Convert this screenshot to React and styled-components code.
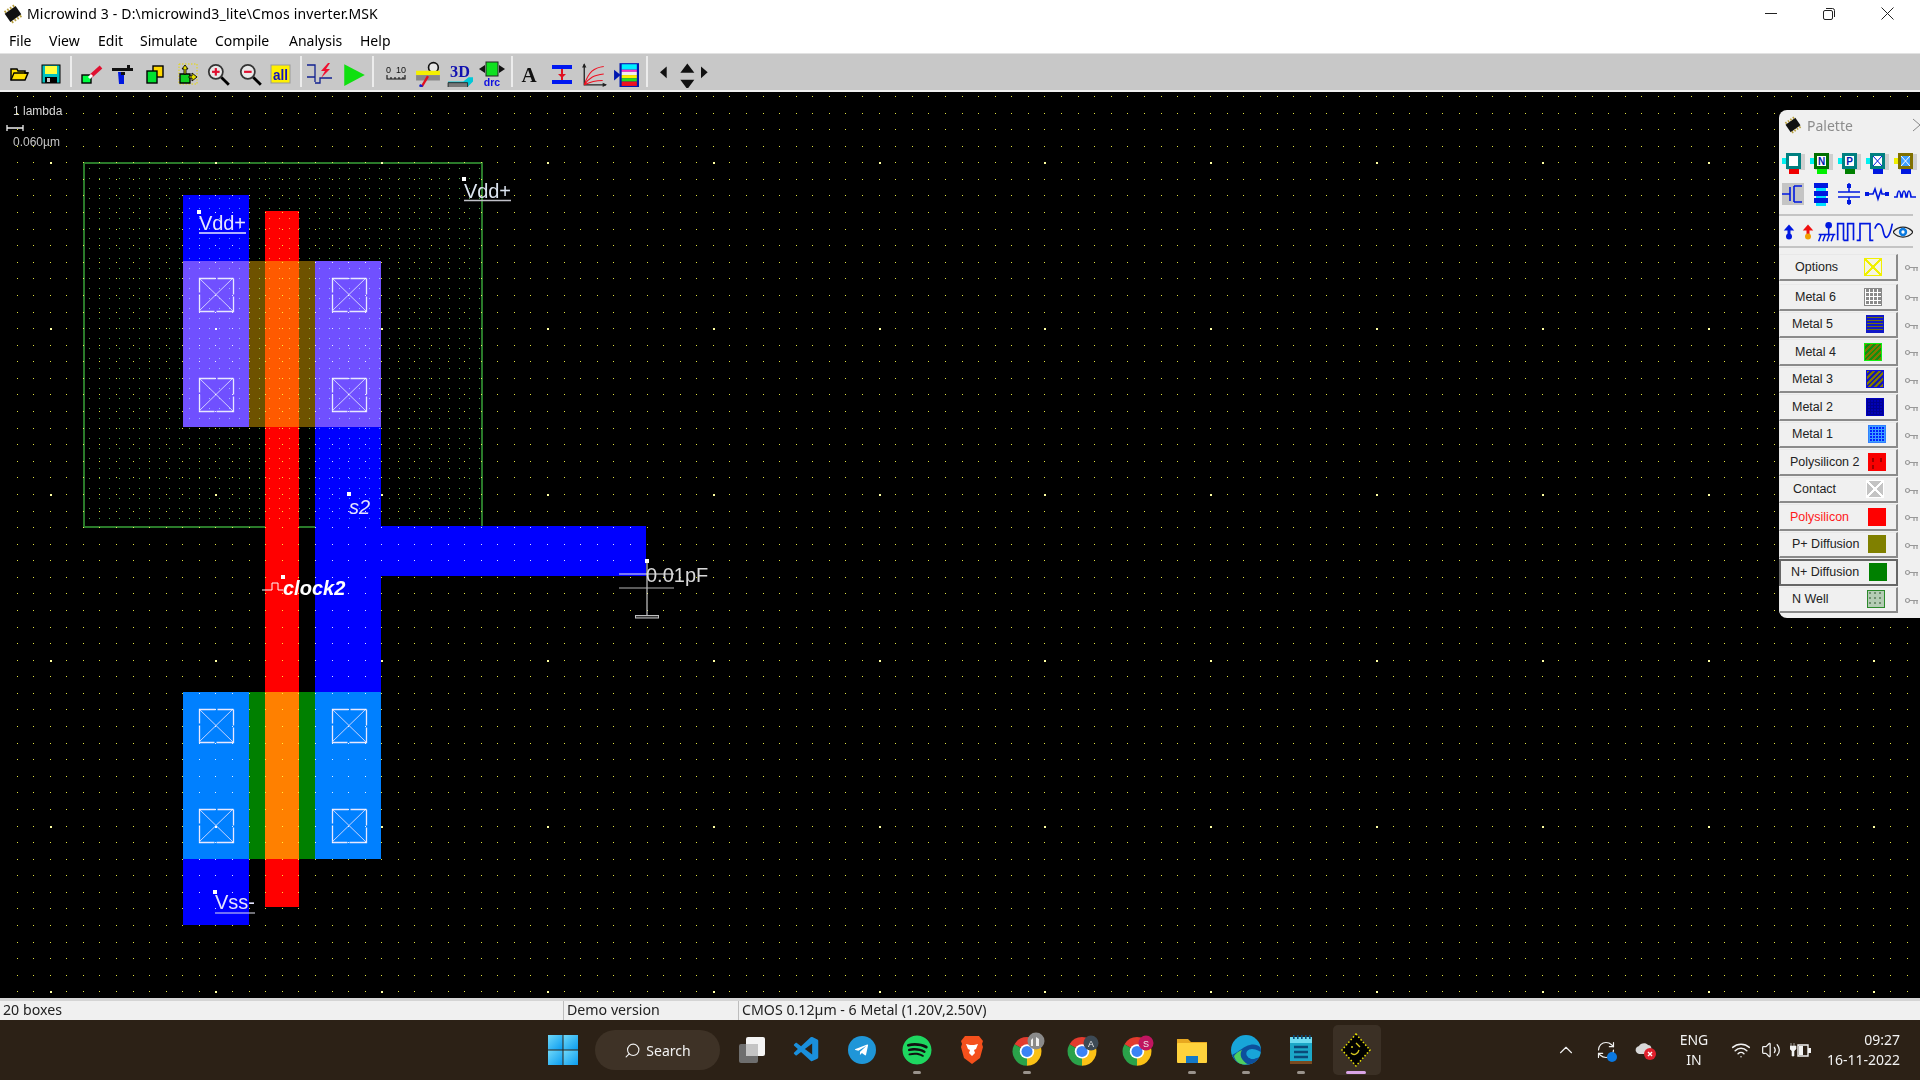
import React from 'react'
import styled, { createGlobalStyle } from 'styled-components'
import { ChevronUp, RefreshCw, Search, Volume2, Wifi } from 'lucide-react'
import { VscVscode } from 'react-icons/vsc'
import { FaSpotify, FaTelegramPlane } from 'react-icons/fa'

const GlobalStyle = createGlobalStyle`
	html, body {
		margin: 0;
		padding: 0;
		background: #000;
	}
	* {
		box-sizing: border-box;
	}
`

const Window = styled.div`
	width: 1920px;
	height: 1080px;
	display: flex;
	flex-direction: column;
	overflow: hidden;
	font-family: "Noto Sans", "Liberation Sans", sans-serif;
	color: #000;
	background: #fff;
`

/* title + menu */
const TitleBar = styled.div`
	height: 27px;
	flex: none;
	display: flex;
	align-items: center;
	padding-left: 3px;
	font-size: 14px;
	letter-spacing: 0.16px;
	svg { flex: none; }
`
const TitleText = styled.span`
	margin-left: 4px;
`
const WinButtons = styled.div`
	margin-left: auto;
	display: flex;
	margin-right: 3px;
`
const WinButton = styled.div`
	width: 58.5px;
	height: 27px;
	display: flex;
	align-items: center;
	justify-content: center;
`
const MenuBar = styled.div`
	height: 26px;
	flex: none;
	display: flex;
	align-items: center;
	font-size: 14px;
`
const MenuItem = styled.span`
	width: ${p => p.$w}px;
	padding-left: ${p => p.$pad || 0}px;
`

/* toolbar */
const Toolbar = styled.div`
	height: 39px;
	flex: none;
	display: flex;
	align-items: stretch;
	padding: 2px 0 3px 3px;
	background: #c8c8c8;
	border-top: 1px solid #e2e2e2;
	border-bottom: 2px solid #f0f0f0;
`
const ToolGroup = styled.div`
	display: flex;
	margin-left: ${p => p.$ml || 0}px;
`
const Tool = styled.div`
	width: ${p => p.$w}px;
	min-width: 0;
	padding-top: 4px;
	display: flex;
	align-items: center;
	justify-content: center;
	svg { flex: none; }
`
const ToolSep = styled.div`
	width: 2px;
	margin: 0 0 0 ${p => p.$ml}px;
	background: #ececec;
`

/* canvas */
const Canvas = styled.div`
	position: relative;
	flex: none;
	height: 906px;
	background: #000;
	overflow: hidden;
`
const Mask = styled.svg`
	display: block;
`
const Dots = styled.path`
	mix-blend-mode: screen;
	fill: ${p => p.$c};
`
const MaskText = styled.text`
	font-family: "Liberation Sans", sans-serif;
	font-size: ${p => p.$size}px;
	font-style: ${p => (p.$italic ? 'italic' : 'normal')};
	font-weight: ${p => (p.$bold ? 700 : 400)};
	fill: ${p => p.$c || '#e4e4ff'};
`

/* palette */
const Palette = styled.div`
	position: absolute;
	left: 1779px;
	top: 18px;
	width: 141px;
	height: 508px;
	background: #f0f0f0;
	border-radius: 8px 0 0 8px;
	overflow: hidden;
	font-family: "Liberation Sans", sans-serif;
`
const PaletteTitle = styled.div`
	height: 30px;
	display: flex;
	align-items: center;
	padding: 0 0 0 5px;
	font-family: "Noto Sans", sans-serif;
	font-size: 14px;
	color: #8c8c8c;
	span { margin-left: 5px; }
	svg:last-child { margin-left: auto; flex: none; }
`
const IconRow = styled.div`
	display: grid;
	grid-template-columns: repeat(${p => p.$cols}, ${p => p.$w}px);
	margin-top: ${p => p.$mt}px;
	height: 24px;
	justify-items: center;
	align-items: center;
`
const Divider = styled.div`
	height: 2px;
	width: 134px;
	margin-top: ${p => p.$mt}px;
	background: #c4c4c4;
`
const Layers = styled.div`
	margin-top: 6px;
	display: flex;
	flex-direction: column;
`
const LayerRow = styled.div`
	height: 27.5px;
	margin-bottom: ${p => p.$extra || 0}px;
	display: flex;
	align-items: flex-start;
`
const LayerButton = styled.div`
	width: 119px;
	height: 26.5px;
	display: flex;
	align-items: center;
	padding-left: ${p => p.$indent}px;
	padding-right: ${p => p.$right}px;
	background: #f0f0f0;
	font-size: 12.5px;
	color: ${p => (p.$red ? '#ff1a1a' : '#222')};
	border: ${p => (p.$on ? '2px solid #666' : '1px solid #e8e8e8')};
	border-right: 2px solid ${p => (p.$on ? '#666' : '#8a8a8a')};
	border-bottom: 2px solid ${p => (p.$on ? '#666' : '#8a8a8a')};
`
const Swatch = styled.div`
	margin-left: auto;
	width: 18px;
	height: 18px;
	flex: none;
	border: 1px solid ${p => p.$edge || 'transparent'};
	background: ${p => p.$fill};
`
const KeySlot = styled.div`
	margin: 4px 0 0 7px;
`

/* status bar */
const StatusBar = styled.div`
	height: 22px;
	flex: none;
	display: flex;
	background: #f0f0f0;
	border-top: 3px solid #d4d4d4;
	font-size: 14.2px;
	line-height: 18px;
	color: #222;
`
const StatusCell = styled.div`
	width: ${p => p.$w}px;
	padding-left: ${p => p.$pad}px;
	border-left: ${p => (p.$first ? 'none' : '1px solid #bdbdbd')};
	white-space: nowrap;
	overflow: hidden;
`

/* taskbar */
const Taskbar = styled.div`
	height: 60px;
	flex: none;
	display: flex;
	align-items: center;
	background: #2c2116;
	color: #f2f2f2;
	font-family: "Noto Sans", sans-serif;
`
const StartSlot = styled.div`
	margin-left: 548px;
	width: 30px;
	height: 30px;
	flex: none;
`
const SearchPill = styled.div`
	margin-left: 17px;
	width: 125px;
	height: 40px;
	flex: none;
	border-radius: 20px;
	background: #3e3226;
	display: flex;
	align-items: center;
	justify-content: center;
	gap: 5px;
	font-size: 14px;
`
const TaskIcons = styled.div`
	display: flex;
	margin-left: 5px;
`
const TaskIcon = styled.div`
	position: relative;
	width: 54.9px;
	height: 60px;
	flex: none;
	display: flex;
	align-items: center;
	justify-content: center;
	&::before {
		content: '';
		display: ${p => (p.$active ? 'block' : 'none')};
		position: absolute;
		left: 4px;
		right: 3px;
		top: 5px;
		bottom: 5px;
		border-radius: 5px;
		background: #3b3025;
	}
	&::after {
		content: '';
		display: ${p => (p.$dot ? 'block' : 'none')};
		position: absolute;
		bottom: 6px;
		left: 50%;
		transform: translateX(-50%);
		height: 3px;
		width: ${p => (p.$active ? 20 : 8)}px;
		border-radius: 2px;
		background: ${p => (p.$active ? '#d9a4e6' : '#9a938c')};
	}
	svg { position: relative; z-index: 1; }
`
const Tray = styled.div`
	position: absolute;
	right: 0;
	display: flex;
	align-items: center;
	height: 60px;
`
const TrayIcon = styled.div`
	position: relative;
	width: ${p => p.$w}px;
	display: flex;
	justify-content: center;
`
const SyncDot = styled.span`
	position: absolute;
	left: 23px;
	top: 12px;
	width: 10px;
	height: 10px;
	border-radius: 50%;
	background: #0a78e0;
`
const Lang = styled.div`
	width: 60px;
	text-align: center;
	font-size: 14px;
	line-height: 20px;
`
const Clock = styled.div`
	width: 82px;
	margin-right: 20px;
	white-space: nowrap;
	text-align: right;
	font-size: 14px;
	line-height: 20px;
`

/* little icons ------------------------------------------------------------ */
const S = ({ size = 24, children, vb = '0 0 24 24' }) => (
	<svg width={size} height={size} viewBox={vb}>{children}</svg>
)

const ChipIcon = ({ size = 20 }) => (
	<S size={size}>
		<g transform="rotate(-35 12 12)">
			<rect x="4" y="6" width="16" height="12" fill="#111" />
			{[5, 9, 13, 17].map(x => <rect key={x} x={x} y="3" width="2" height="3" fill="#b8a040" />)}
			{[5, 9, 13, 17].map(x => <rect key={x} x={x} y="18" width="2" height="3" fill="#b8a040" />)}
		</g>
	</S>
)
const Magnifier = ({ minus }) => (
	<S size={26}>
		<line x1="15" y1="15" x2="22" y2="22" stroke="#000" strokeWidth="2.6" />
		<circle cx="10" cy="10" r="6.5" fill="#e8e8e8" stroke="#333" strokeWidth="1.6" />
		<rect x="6.5" y="9" width="7" height="2" fill="#e01030" />
		{!minus && <rect x="9" y="6.5" width="2" height="7" fill="#e01030" />}
	</S>
)
const tools = {
	open: <S><path d="M4 7h6l1 2h7v2h3l-3 7H4z" fill="#ffe000" stroke="#000" strokeWidth="1.5" /><path d="M4 18l3-7h14" fill="none" stroke="#000" strokeWidth="1.3" /></S>,
	save: <S><rect x="3" y="3" width="18" height="18" fill="#00c0c0" stroke="#000" strokeWidth="1" /><rect x="6" y="4" width="12" height="8" fill="#ffff40" /><rect x="6" y="15" width="12" height="6" fill="#000" /><rect x="8" y="16" width="3" height="4" fill="#c8c8c8" /></S>,
	edit: <S><rect x="2" y="13" width="9" height="8" fill="#00ff40" stroke="#000" strokeWidth="1.4" /><path d="M11 14L21 5" stroke="#e01030" strokeWidth="4" /><path d="M9 16l3-3" stroke="#fff" strokeWidth="3" /></S>,
	gun: <S><path d="M1 6h15V3h3v3h3v3H1z" fill="#111" /><path d="M7 10h6v12H8z" fill="#0018e0" /><rect x="10" y="10" width="4" height="3" fill="#111" /></S>,
	copy: <S><rect x="10" y="4" width="10" height="11" fill="#ffd800" stroke="#000" strokeWidth="1.4" /><rect x="4" y="9" width="10" height="12" fill="#00e030" stroke="#000" strokeWidth="1.4" /></S>,
	move: <S><rect x="4" y="2" width="18" height="20" fill="none" stroke="#e8d800" strokeWidth="1" strokeDasharray="1.5 1.5" /><path d="M5 12h10v9H5z" fill="#10d020" stroke="#000" strokeWidth="1.3" /><path d="M9 12V7H7l3-4 3 4h-2v5z" fill="#e8e000" stroke="#000" strokeWidth=".9" /><path d="M14 14h3v-3l5 4-5 4v-3h-3z" fill="#e8e000" stroke="#000" strokeWidth=".9" /></S>,
	zoomin: <Magnifier />,
	zoomout: <Magnifier minus />,
	all: <S><rect x="2" y="3" width="19" height="18" fill="#fff000" stroke="#999" strokeWidth="1" /><text x="11.5" y="18" textAnchor="middle" fontSize="14" fontWeight="700" fontFamily="Liberation Sans Narrow, Liberation Sans" fill="#1010c0" textLength="15" lengthAdjust="spacingAndGlyphs">all</text></S>,
	mos: <svg width="28" height="24" viewBox="0 0 28 24"><path d="M1 3h8v6M9 9v6h-8M9 3v12M9 20v-5M9 21h5v-5h12" fill="none" stroke="#102090" strokeWidth="1.3" /><path d="M22 1l-7 8 4 0-4 7 9-9-4 0 4-6z" fill="#f01030" /></svg>,
	play: <S size={26}><path d="M3 3l19 10L3 23z" fill="#10e010" /></S>,
	ruler: <S><text x="2" y="11" fontSize="9" fontFamily="Liberation Sans" fill="#111">0</text><text x="12" y="11" fontSize="9" fontFamily="Liberation Sans" fill="#111">10</text><path d="M3 13v4h18v-4M7 15v2M11 15v2M15 15v2M19 15v2" fill="none" stroke="#111" strokeWidth="1.1" /></S>,
	cross: <S size={26}><circle cx="17" cy="6" r="4.5" fill="#e8e8e8" stroke="#111" strokeWidth="1.5" /><rect x="1" y="9" width="22" height="4" fill="#f4f000" /><rect x="1" y="13" width="22" height="5" fill="#888" /><path d="M12 14L6 24" stroke="#e01020" strokeWidth="2.2" /><path d="M6 22l-1 2" stroke="#1020d0" strokeWidth="3" /></S>,
	td: <S size={26}><path d="M1 24h18l5-5V15H20l-5 4H1z" fill="#00c8d8" /><path d="M1 20h18v5H1z" fill="#777" stroke="#222" strokeWidth=".8" /><text x="12" y="15" textAnchor="middle" fontSize="15" fontWeight="700" fontFamily="Liberation Serif" fill="#1010b0">3D</text></S>,
	drc: <svg width="28" height="26" viewBox="0 0 28 26"><rect x="8" y="1" width="12" height="14" fill="#10e020" stroke="#222" strokeWidth="1" /><path d="M1 8l6-4v8zM27 8l-6-4v8z" fill="#111" /><text x="14" y="25" textAnchor="middle" fontSize="10.5" fontWeight="700" fontFamily="Liberation Sans" fill="#1010e0">drc</text></svg>,
	a: <S><text x="12" y="20" textAnchor="middle" fontSize="21" fontWeight="700" fontFamily="Liberation Serif" fill="#111">A</text></S>,
	ibeam: <S><rect x="2" y="3" width="20" height="4" fill="#0018f0" /><rect x="2" y="18" width="20" height="4" fill="#0018f0" /><path d="M12 7v11" stroke="#e01020" strokeWidth="2" /><path d="M8 12h8l-4 4z" fill="#e01020" /></S>,
	curve: <S size={26}><path d="M3 3v19h20" fill="none" stroke="#222" strokeWidth="1.2" /><path d="M1 6l2-4 2 4zM20 20l4 2-4 2z" fill="#222" /><path d="M3 22C7 10 12 6 21 5M3 22c5-7 9-9 18-10M3 22c6-3 10-4 17-4" fill="none" stroke="#f01020" strokeWidth="1" /></S>,
	layers: <S size={26}><rect x="6" y="2" width="18" height="22" fill="#0018b0" /><rect x="8" y="3" width="14" height="5" fill="#00f0ff" /><rect x="8" y="8" width="14" height="2" fill="#ff30c0" /><rect x="8" y="10" width="14" height="3" fill="#f0f0f0" /><rect x="8" y="13" width="14" height="3" fill="#ffee00" /><rect x="8" y="16" width="14" height="3" fill="#20e020" /><rect x="8" y="19" width="14" height="4" fill="#f01020" /><path d="M1 8l6 5-6 5z" fill="#0018b0" /></S>,
	left: <S size={20}><path d="M14 3v14L6 10z" fill="#111" /></S>,
	updown: <S size={28}><path d="M8 11l6-8 6 8zM8 17l6 8 6-8z" fill="#111" /></S>,
	right: <S size={20}><path d="M6 3v14l8-7z" fill="#111" /></S>,
}
const toolGroups = [
	{ ml: 0, w: 32, items: ['open', 'save'] },
	{ sep: 3, ml: 4, w: 31.6, items: ['edit', 'gun', 'copy', 'move', 'zoomin', 'zoomout', 'all'] },
	{ sep: 3, ml: 1, w: 34, items: ['mos', 'play'] },
	{ sep: 1, ml: 6, w: 32, items: ['ruler', 'cross', 'td', 'drc'] },
	{ sep: 3, ml: 0, w: 32.3, items: ['a', 'ibeam', 'curve', 'layers'] },
	{ sep: 4, ml: 6, w: 20.5, items: ['left', 'updown', 'right'] },
]

const Cell = ({ stub, body, under, bodyEdge = '#008080', children }) => (
	<S size={24}>
		<rect x="6" y="3" width="18" height="16" fill="#cfcfcf" />
		<rect x="1" y="7" width="7" height="6" fill={stub} />
		<rect x="8" y="17" width="10" height="6" fill={under} />
		<rect x="5" y="2" width="15" height="16" fill={bodyEdge} />
		<rect x="8" y="5" width="9" height="10" fill={body} />
		{children}
	</S>
)
const CellLetter = ({ c }) => (
	<text x="12.5" y="14" textAnchor="middle" fontSize="10" fontWeight="700" fontFamily="Liberation Sans" fill="#0018b0">{c}</text>
)
const CellCross = ({ c = '#0018e0' }) => <path d="M8 5l9 10M17 5l-9 10" stroke={c} strokeWidth="1" />

const paletteRow1 = [
	<Cell key="a" stub="#00f0f0" body="#fff" under="#f00000" />,
	<Cell key="b" stub="#00f0f0" body="#fff" under="#00f000" bodyEdge="#007000"><CellLetter c="N" /></Cell>,
	<Cell key="c" stub="#00f0f0" body="#fff" under="#008000"><CellLetter c="P" /></Cell>,
	<Cell key="d" stub="#00f0f0" body="#fff" under="#0018e0"><CellCross /></Cell>,
	<Cell key="e" stub="#f0f000" body="#40a0ff" under="#0018e0" bodyEdge="#807000"><CellCross c="#fff" /></Cell>,
]
const B = '#0018e0'
const paletteRow2 = [
	<S key="a"><rect x="1" y="1" width="22" height="22" fill="#c4c4c4" /><path d="M1 12h8M9 5v14M13 4v16M13 4h8M13 20h8" fill="none" stroke={B} strokeWidth="1.6" /></S>,
	<S key="b"><rect x="5" y="1" width="14" height="5" fill={B} /><rect x="5" y="9" width="14" height="5" fill={B} /><rect x="5" y="16" width="14" height="5" fill={B} /><rect x="7" y="6" width="10" height="3" fill="#00e0ff" /><rect x="7" y="14" width="10" height="2" fill="#00e0ff" /><rect x="7" y="21" width="10" height="3" fill="#00e0ff" /></S>,
	<S key="c"><path d="M12 1v9M1 10h22M1 15h22M12 15v8" fill="none" stroke={B} strokeWidth="1.5" /><rect x="10" y="2" width="4" height="4" fill={B} /><rect x="10" y="18" width="4" height="4" fill={B} /></S>,
	<S key="d"><path d="M4 12h4l2-5 3 10 3-9 1 4h3" fill="none" stroke={B} strokeWidth="1.6" /><rect x="0" y="10" width="4" height="4" fill={B} /><rect x="20" y="10" width="4" height="4" fill={B} /></S>,
	<S key="e"><path d="M1 15h3c1-8 3-8 4 0h1c1-8 3-8 4 0h1c1-8 3-8 4 0h5" fill="none" stroke={B} strokeWidth="1.7" /></S>,
]
const paletteRow3 = [
	<S key="a" size={18}><path d="M12 2l7 8h-5v5h-4v-5H5z" fill={B} /><circle cx="12" cy="18" r="4" fill={B} /></S>,
	<S key="b" size={18}><path d="M12 2l7 8h-5v5h-4v-5H5z" fill="#f01010" /><circle cx="12" cy="18" r="4" fill="#f0a000" /></S>,
	<S key="c" size={20}><circle cx="14" cy="4" r="4" fill={B} /><path d="M14 6v9M2 15h20M5 15l-3 8M10 15l-3 8M15 15l-3 8M20 15l-3 8" stroke={B} strokeWidth="1.8" /></S>,
	<S key="d" size={20}><path d="M2 22V2h7v20M9 22h5V2h7v20" fill="none" stroke={B} strokeWidth="2" /></S>,
	<S key="e" size={20}><path d="M2 22h4V2h12v20h4" fill="none" stroke={B} strokeWidth="2" /></S>,
	<S key="f" size={20}><path d="M1 8c3-8 8-8 10 3s7 11 11-9" fill="none" stroke={B} strokeWidth="2" /></S>,
	<S key="g" size={20}><path d="M0 12c6-8 18-8 24 0-6 8-18 8-24 0z" fill="#eee" stroke="#222" strokeWidth="1.5" /><circle cx="12" cy="12" r="5" fill="#0a7ae0" /><circle cx="12" cy="12" r="2" fill="#fff" /></S>,
]

const hatch = (a, b) => `repeating-linear-gradient(135deg, ${a} 0 2px, ${b} 2px 4px)`
const grid = (a, b) => `repeating-linear-gradient(0deg, ${a} 0 1px, transparent 1px 3px), repeating-linear-gradient(90deg, ${a} 0 1px, ${b} 1px 3px)`
const crossFill = (line, back) => `linear-gradient(45deg, transparent 46%, ${line} 46% 54%, transparent 54%), linear-gradient(-45deg, transparent 46%, ${line} 46% 54%, transparent 54%), ${back}`
const layerRows = [
	{ name: 'Metal 6', indent: 15, right: 14, edge: '#888', fill: 'repeating-linear-gradient(0deg, #fff 0 1px, transparent 1px 4px), repeating-linear-gradient(90deg, #fff 0 1px, #8a8a8a 1px 4px)' },
	{ name: 'Metal 5', indent: 12, right: 12, edge: '#1018c8', fill: 'repeating-linear-gradient(0deg, #1018c8 0 2px, #707010 2px 3px)' },
	{ name: 'Metal 4', indent: 15, right: 14, edge: '#10f010', fill: hatch('#807800', '#109010') },
	{ name: 'Metal 3', indent: 12, right: 12, edge: '#1010e0', fill: hatch('#807800', '#1818b0') },
	{ name: 'Metal 2', indent: 12, right: 12, edge: '#0000c0', fill: grid('#000090', '#0000b8') },
	{ name: 'Metal 1', indent: 12, right: 10, edge: '#3080ff', fill: grid('#40a0ff', '#0020ff') },
	{ name: 'Polysilicon 2', indent: 10, right: 10, edge: '#f00', fill: 'linear-gradient(#a00000, #a00000) 3px 4px / 2px 4px no-repeat, linear-gradient(#a00000, #a00000) 11px 4px / 2px 4px no-repeat, linear-gradient(#a00000, #a00000) 3px 11px / 2px 4px no-repeat, #f80000' },
	{ name: 'Contact', indent: 13, right: 12, edge: '#fff', fill: crossFill('#fff', '#c4c4c4') },
	{ name: 'Polysilicon', indent: 10, right: 10, fill: '#ff0000', red: true },
	{ name: 'P+ Diffusion', indent: 12, right: 10, fill: '#808000' },
	{ name: 'N+ Diffusion', indent: 10, right: 9, fill: '#008000', on: true },
	{ name: 'N Well', indent: 12, right: 11, edge: '#2a8a2a', fill: 'radial-gradient(circle at 2px 2px, #6f8f6f 1px, transparent 1.2px) 0 0 / 5px 5px, #b4ccb4' },
]
const KeyIcon = () => (
	<svg width="13" height="8" viewBox="0 0 13 8">
		<circle cx="2.5" cy="3.5" r="2" fill="none" stroke="#999" strokeWidth="1.2" />
		<path d="M4.5 3.5H13M9 3.5V7M12 3.5V7" stroke="#999" strokeWidth="1.2" fill="none" />
	</svg>
)

/* mask drawing ------------------------------------------------------------ */
const GX = 16.5
const GY = 13.1
const PITCH = 16.58
const minorDots = []
const majorDots = []
for (let j = 5; j < 60; j++) {
	for (let i = 0; i < 116; i++) {
		const x = Math.round(GX + i * PITCH)
		const y = Math.round(GY + j * PITCH)
		if (i % 10 === 2 && j % 10 === 9) majorDots.push(`M${x} ${y}h2v2h-2z`)
		else minorDots.push(`M${x} ${y}h1v1h-1z`)
	}
}
const wellDots = []
for (let y = 168; y < 527; y += 10) {
	for (let x = 89; x < 482; x += 10) wellDots.push(`M${x} ${y}h1v1h-1z`)
}
const contacts = [
	[199, 278], [332, 278], [199, 378], [332, 378],
	[199, 709], [332, 709], [199, 809], [332, 809],
]
const rects = [
	// n well is drawn apart, metal first
	[183, 195, 66, 66, '#0000ff'],
	[315, 427, 66, 99, '#0000ff'],
	[315, 526, 331, 50, '#0000ff'],
	[315, 576, 66, 116, '#0000ff'],
	[183, 859, 66, 66, '#0000ff'],
	[265, 211, 34, 696, '#ff0000'],
	[183, 261, 66, 166, '#7050ff'],
	[315, 261, 66, 166, '#7050ff'],
	[249, 261, 16, 166, '#6e5200'],
	[299, 261, 16, 166, '#6e5200'],
	[265, 261, 34, 166, '#ff5a00'],
	[183, 692, 66, 167, '#0080ff'],
	[315, 692, 66, 167, '#0080ff'],
	[249, 692, 16, 167, '#008000'],
	[299, 692, 16, 167, '#008000'],
	[265, 692, 34, 167, '#ff8000'],
]
const Node = ({ x, y }) => <rect x={x - 2} y={y - 2} width="4" height="4" fill="#fff" />
const Drawing = () => (
	<Mask width="1920" height="906" viewBox="0 92 1920 906" shapeRendering="crispEdges">
		<rect x="84" y="163" width="398" height="364" fill="none" stroke="#2a7a2a" strokeWidth="2" />
		{rects.map(([x, y, w, h, c]) => <rect key={`${x}-${y}`} x={x} y={y} width={w} height={h} fill={c} />)}
		{contacts.map(([x, y]) => (
			<g key={`${x}-${y}`} shapeRendering="auto">
				<rect x={x + 0.5} y={y + 0.5} width="34" height="33" fill="none" stroke="#e8e8ff" strokeWidth="1.3" strokeDasharray="16 2 16 0" />
				<path d={`M${x} ${y}l34 33M${x + 34} ${y}l-34 33`} stroke="#dcdcff" strokeWidth="0.9" />
			</g>
		))}
		<Dots $c="#48a848" d={wellDots.join('')} />
		<Dots $c="#e0e040" d={minorDots.join('')} />
		<Dots $c="#ffffa0" d={majorDots.join('')} />

		<g shapeRendering="auto">
			<MaskText $size={12} $c="#d8d8d8" x="13" y="115">1 lambda</MaskText>
			<path d="M7 125v6M23 125v6M7 128h16" stroke="#eee" strokeWidth="1.3" fill="none" />
			<MaskText $size={12} $c="#c4c4c4" x="13" y="146">0.060µm</MaskText>

			<Node x={199} y={212} />
			<MaskText $size={20} x="199" y="230" textLength="47">Vdd+</MaskText>
			<path d="M199 233h47" stroke="#e8e8ff" strokeWidth="1.3" />
			<Node x={464} y={179} />
			<MaskText $size={20} $c="#dce4f0" x="464" y="197.5" textLength="47">Vdd+</MaskText>
			<path d="M464 200.5h47" stroke="#c0c0c8" strokeWidth="1.3" />
			<Node x={349} y={494} />
			<MaskText $size={20} $italic x="349" y="514">s2</MaskText>
			<Node x={283} y={577} />
			<path d="M262 590h10v-7h6v7h5" fill="none" stroke="#fff" strokeWidth="1" />
			<MaskText $size={20} $bold $italic $c="#fff" x="283" y="595">clock2</MaskText>
			<Node x={647} y={561} />
			<path d="M647 561v54M619 574h55" stroke="#f0f0f0" strokeWidth="1" />
			<path d="M619 588h55" stroke="#b4b4b4" strokeWidth="1.2" />
			<rect x="635.5" y="615.5" width="23" height="2.5" fill="#333" stroke="#c0c0c0" strokeWidth="1" />
			<MaskText $size={20} $c="#d8d8d8" x="646" y="582">0.01pF</MaskText>
			<Node x={215} y={892} />
			<MaskText $size={20} x="215" y="909" textLength="40">Vss-</MaskText>
			<path d="M215 913h40" stroke="#e0e0f0" strokeWidth="1.2" />
		</g>
	</Mask>
)

/* taskbar icons ------------------------------------------------------------ */
const WinLogo = () => (
	<svg width="30" height="30" viewBox="0 0 30 30">
		<defs>
			<linearGradient id="wl" x1="0" y1="0" x2="1" y2="1">
				<stop offset="0" stopColor="#6fd8f8" />
				<stop offset="1" stopColor="#0a9cf0" />
			</linearGradient>
		</defs>
		<rect x="0" y="0" width="14.5" height="14.5" fill="url(#wl)" />
		<rect x="15.5" y="0" width="14.5" height="14.5" fill="url(#wl)" />
		<rect x="0" y="15.5" width="14.5" height="14.5" fill="url(#wl)" />
		<rect x="15.5" y="15.5" width="14.5" height="14.5" fill="url(#wl)" />
	</svg>
)
const TaskView = () => (
	<S size={30} vb="0 0 30 30">
		<rect x="2" y="9" width="19" height="19" rx="2" fill="#6e6e6e" />
		<rect x="9" y="2" width="19" height="19" rx="2" fill="#f4f4f4" />
		<rect x="9" y="9" width="12" height="12" fill="#c4c4c4" />
	</S>
)
const Telegram = () => (
	<svg width="30" height="30" viewBox="0 0 30 30">
		<circle cx="15" cy="15" r="14" fill="#1f96d8" />
		<g transform="translate(7 7.5)" color="#fff"><FaTelegramPlane size={15} /></g>
	</svg>
)
const Spotify = () => <FaSpotify size={30} color="#1ed760" style={{ background: 'radial-gradient(circle, #111 58%, transparent 60%)', borderRadius: '50%' }} />
const Brave = () => (
	<S size={30} vb="0 0 30 30">
		<path d="M8 1h14l4 5-1 3 1 3-3 11-8 6-8-6L4 12l1-3-1-3z" fill="#f4501c" />
		<path d="M9 9l4 1h4l4-1-2 5-2 1 1 3-3 3-3-3 1-3-2-1z" fill="#fff" />
	</S>
)
const Chrome = ({ badge, badgeColor, photo }) => (
	<svg width="36" height="36" viewBox="0 0 36 36">
		<g transform="translate(3.6 5) scale(1.2)">
			<path d="M12 12L1.6 6A12 12 0 0 1 22.4 6Z" fill="#e33b2e" />
			<path d="M12 12L22.4 6A12 12 0 0 1 12 24Z" fill="#fbc116" />
			<path d="M12 12L12 24A12 12 0 0 1 1.6 6Z" fill="#2aa24a" />
			<circle cx="12" cy="12" r="6" fill="#fff" />
			<circle cx="12" cy="12" r="4.6" fill="#3b82f4" />
		</g>
		{photo && <circle cx="27" cy="9" r="8.5" fill="#8a8a8a" />}
		{photo && <path d="M22 14v-6l2-2v8M27 14V5l3 2v7" fill="#f0f0f0" />}
		{badge && <circle cx="27" cy="11" r="7.5" fill={badgeColor} />}
		{badge && <text x="27" y="14.5" textAnchor="middle" fontSize="9" fontFamily="Liberation Sans" fill="#eee">{badge}</text>}
	</svg>
)
const Folder = () => (
	<S size={32} vb="0 0 32 32">
		<path d="M1 5h11l3 3h16v4H1z" fill="#e8a820" />
		<rect x="1" y="9" width="30" height="20" rx="1" fill="#ffd23c" />
		<rect x="10" y="22" width="12" height="7" fill="#1479c8" />
	</S>
)
const Edge = () => (
	<S size={32} vb="0 0 32 32">
		<circle cx="16" cy="16" r="15" fill="#18a5d8" />
		<path d="M2 21a15 15 0 0 0 27 2c-4 3-10 3-12-1-2-4 1-7 5-7 5 0 8 3 9 3 0-2 0-3-1-5-2-2-6-3-10-2-6 1-10 6-18 10z" fill="#0d4f9c" />
		<path d="M12 16c-3 4-1 11 6 14-8 2-13-3-14-8 2-3 5-5 8-6z" fill="#4fcf60" />
		<path d="M17 22c2 4 8 4 12 1-3 6-8 7-11 7-4-1-5-6-1-8z" fill="#0d4f9c" />
	</S>
)
const Notepad = () => (
	<S size={32} vb="0 0 32 32">
		<rect x="5" y="3" width="22" height="27" fill="#1ca8c8" />
		<rect x="5" y="3" width="22" height="6" fill="#6fdcf0" />
		<rect x="5" y="27" width="22" height="3" fill="#7a4a20" />
		<path d="M9 13h14M9 18h14M9 23h14" stroke="#0b4a78" strokeWidth="2.4" />
		{[8, 12, 16, 20, 24].map(x => <rect key={x} x={x} y="1" width="1.6" height="4" fill="#0b4a78" />)}
	</S>
)
const MicrowindTask = () => (
	<S size={34} vb="0 0 34 34">
		<path d="M17 1l14 16-14 16L3 17z" fill="#000" stroke="#e8e000" strokeWidth="1.5" strokeDasharray="1.5 2" />
		<path d="M12 20c3 3 7 1 8-3M17 10l4 4M12 14h2" stroke="#d8c820" strokeWidth="1.3" fill="none" />
	</S>
)
const OneDrive = () => (
	<S size={22} vb="0 0 22 22">
		<path d="M2 14a4 4 0 0 1 2-7c1-3 7-4 9-1 3 0 4 3 3 6l-3 3H4z" fill="#d8d8d8" />
		<circle cx="15" cy="15" r="6" fill="#e0202c" />
		<path d="M13 13l4 4M17 13l-4 4" stroke="#fff" strokeWidth="1.4" />
	</S>
)
const Battery = () => (
	<S size={22} vb="0 0 22 22">
		<path d="M1 4v3M4 4v3M0 7h6v3l-2 2v5H2v-5l-2-2z" fill="#f2f2f2" stroke="#f2f2f2" strokeWidth=".6" />
		<path d="M8 6h10v11H8z" fill="none" stroke="#f2f2f2" strokeWidth="1.4" />
		<rect x="9" y="7" width="4" height="9" fill="#f2f2f2" />
		<rect x="18" y="9" width="3" height="5" fill="#f2f2f2" />
	</S>
)
const taskIcons = [
	{ id: 'view', el: <TaskView /> },
	{ id: 'code', el: <VscVscode size={30} color="#1a8fdc" /> },
	{ id: 'tele', el: <Telegram /> },
	{ id: 'spot', el: <Spotify />, dot: true },
	{ id: 'brave', el: <Brave /> },
	{ id: 'c1', el: <Chrome photo />, dot: true },
	{ id: 'c2', el: <Chrome badge="A" badgeColor="#3d4a55" /> },
	{ id: 'c3', el: <Chrome badge="S" badgeColor="#c01560" /> },
	{ id: 'folder', el: <Folder />, dot: true },
	{ id: 'edge', el: <Edge />, dot: true },
	{ id: 'note', el: <Notepad />, dot: true },
	{ id: 'mw', el: <MicrowindTask />, dot: true, active: true },
]

const App = () => (
	<Window>
		<GlobalStyle />
		<TitleBar>
			<ChipIcon />
			<TitleText>Microwind 3 - D:\microwind3_lite\Cmos inverter.MSK</TitleText>
			<WinButtons>
				<WinButton><svg width="12" height="2"><rect width="12" height="1" fill="#222" /></svg></WinButton>
				<WinButton><svg width="12" height="12" viewBox="0 0 12 12"><rect x="0.5" y="2.5" width="9" height="9" rx="1.5" fill="none" stroke="#222" /><path d="M3 .5h6.5a2 2 0 0 1 2 2V9" fill="none" stroke="#222" /></svg></WinButton>
				<WinButton><svg width="13" height="13" viewBox="0 0 13 13"><path d="M.5.5l12 12M12.5.5l-12 12" stroke="#222" /></svg></WinButton>
			</WinButtons>
		</TitleBar>
		<MenuBar>
			<MenuItem $w={49} $pad={9}>File</MenuItem>
			<MenuItem $w={49}>View</MenuItem>
			<MenuItem $w={42}>Edit</MenuItem>
			<MenuItem $w={75}>Simulate</MenuItem>
			<MenuItem $w={74}>Compile</MenuItem>
			<MenuItem $w={71}>Analysis</MenuItem>
			<MenuItem $w={40}>Help</MenuItem>
		</MenuBar>
		<Toolbar>
			{toolGroups.map(g => (
				<React.Fragment key={g.items[0]}>
					{g.sep !== undefined && <ToolSep $ml={g.sep} />}
					<ToolGroup $ml={g.ml}>
						{g.items.map(t => <Tool key={t} $w={g.w}>{tools[t]}</Tool>)}
					</ToolGroup>
				</React.Fragment>
			))}
		</Toolbar>
		<Canvas>
			<Drawing />
			<Palette>
				<PaletteTitle>
					<ChipIcon size={18} />
					<span>Palette</span>
					<svg width="10" height="14" viewBox="0 0 10 14"><path d="M3 1l7 6-7 6" fill="none" stroke="#888" strokeWidth="1" /></svg>
				</PaletteTitle>
				<IconRow $cols={5} $w={28} $mt={11}>{paletteRow1}</IconRow>
				<IconRow $cols={5} $w={28} $mt={7}>{paletteRow2}</IconRow>
				<Divider $mt={8} />
				<IconRow $cols={7} $w={19} $mt={4}>{paletteRow3}</IconRow>
				<Divider $mt={2} />
				<Layers>
					<LayerRow $extra={2.5}>
						<LayerButton $indent={15} $right={14}>
							Options
							<Swatch $edge="#f0f000" $fill={crossFill('#f0f000', '#f4f4e0')} />
						</LayerButton>
						<KeySlot><KeyIcon /></KeySlot>
					</LayerRow>
					{layerRows.map(r => (
						<LayerRow key={r.name}>
							<LayerButton $indent={r.indent} $right={r.right} $red={r.red} $on={r.on}>
								{r.name}
								<Swatch $edge={r.edge} $fill={r.fill} />
							</LayerButton>
							<KeySlot><KeyIcon /></KeySlot>
						</LayerRow>
					))}
				</Layers>
			</Palette>
		</Canvas>
		<StatusBar>
			<StatusCell $first $w={563} $pad={3}>20 boxes</StatusCell>
			<StatusCell $w={175} $pad={3}>Demo version</StatusCell>
			<StatusCell $w={400} $pad={3}>CMOS 0.12µm - 6 Metal (1.20V,2.50V)</StatusCell>
		</StatusBar>
		<Taskbar>
			<StartSlot><WinLogo /></StartSlot>
			<SearchPill><Search size={17} strokeWidth={1.6} style={{ transform: 'scaleX(-1)' }} />Search</SearchPill>
			<TaskIcons>
				{taskIcons.map(t => (
					<TaskIcon key={t.id} $dot={t.dot} $active={t.active}>{t.el}</TaskIcon>
				))}
			</TaskIcons>
			<Tray>
				<TrayIcon $w={36}><ChevronUp size={22} strokeWidth={1.2} /></TrayIcon>
				<TrayIcon $w={44}><RefreshCw size={20} strokeWidth={1.4} /><SyncDot /></TrayIcon>
				<TrayIcon $w={36}><OneDrive /></TrayIcon>
				<Lang>ENG<br />IN</Lang>
				<TrayIcon $w={34}><Wifi size={20} strokeWidth={1.8} /></TrayIcon>
				<TrayIcon $w={26}><Volume2 size={20} strokeWidth={1.5} /></TrayIcon>
				<TrayIcon $w={34}><Battery /></TrayIcon>
				<Clock>09:27<br />16-11-2022</Clock>
			</Tray>
		</Taskbar>
	</Window>
)

export default App
